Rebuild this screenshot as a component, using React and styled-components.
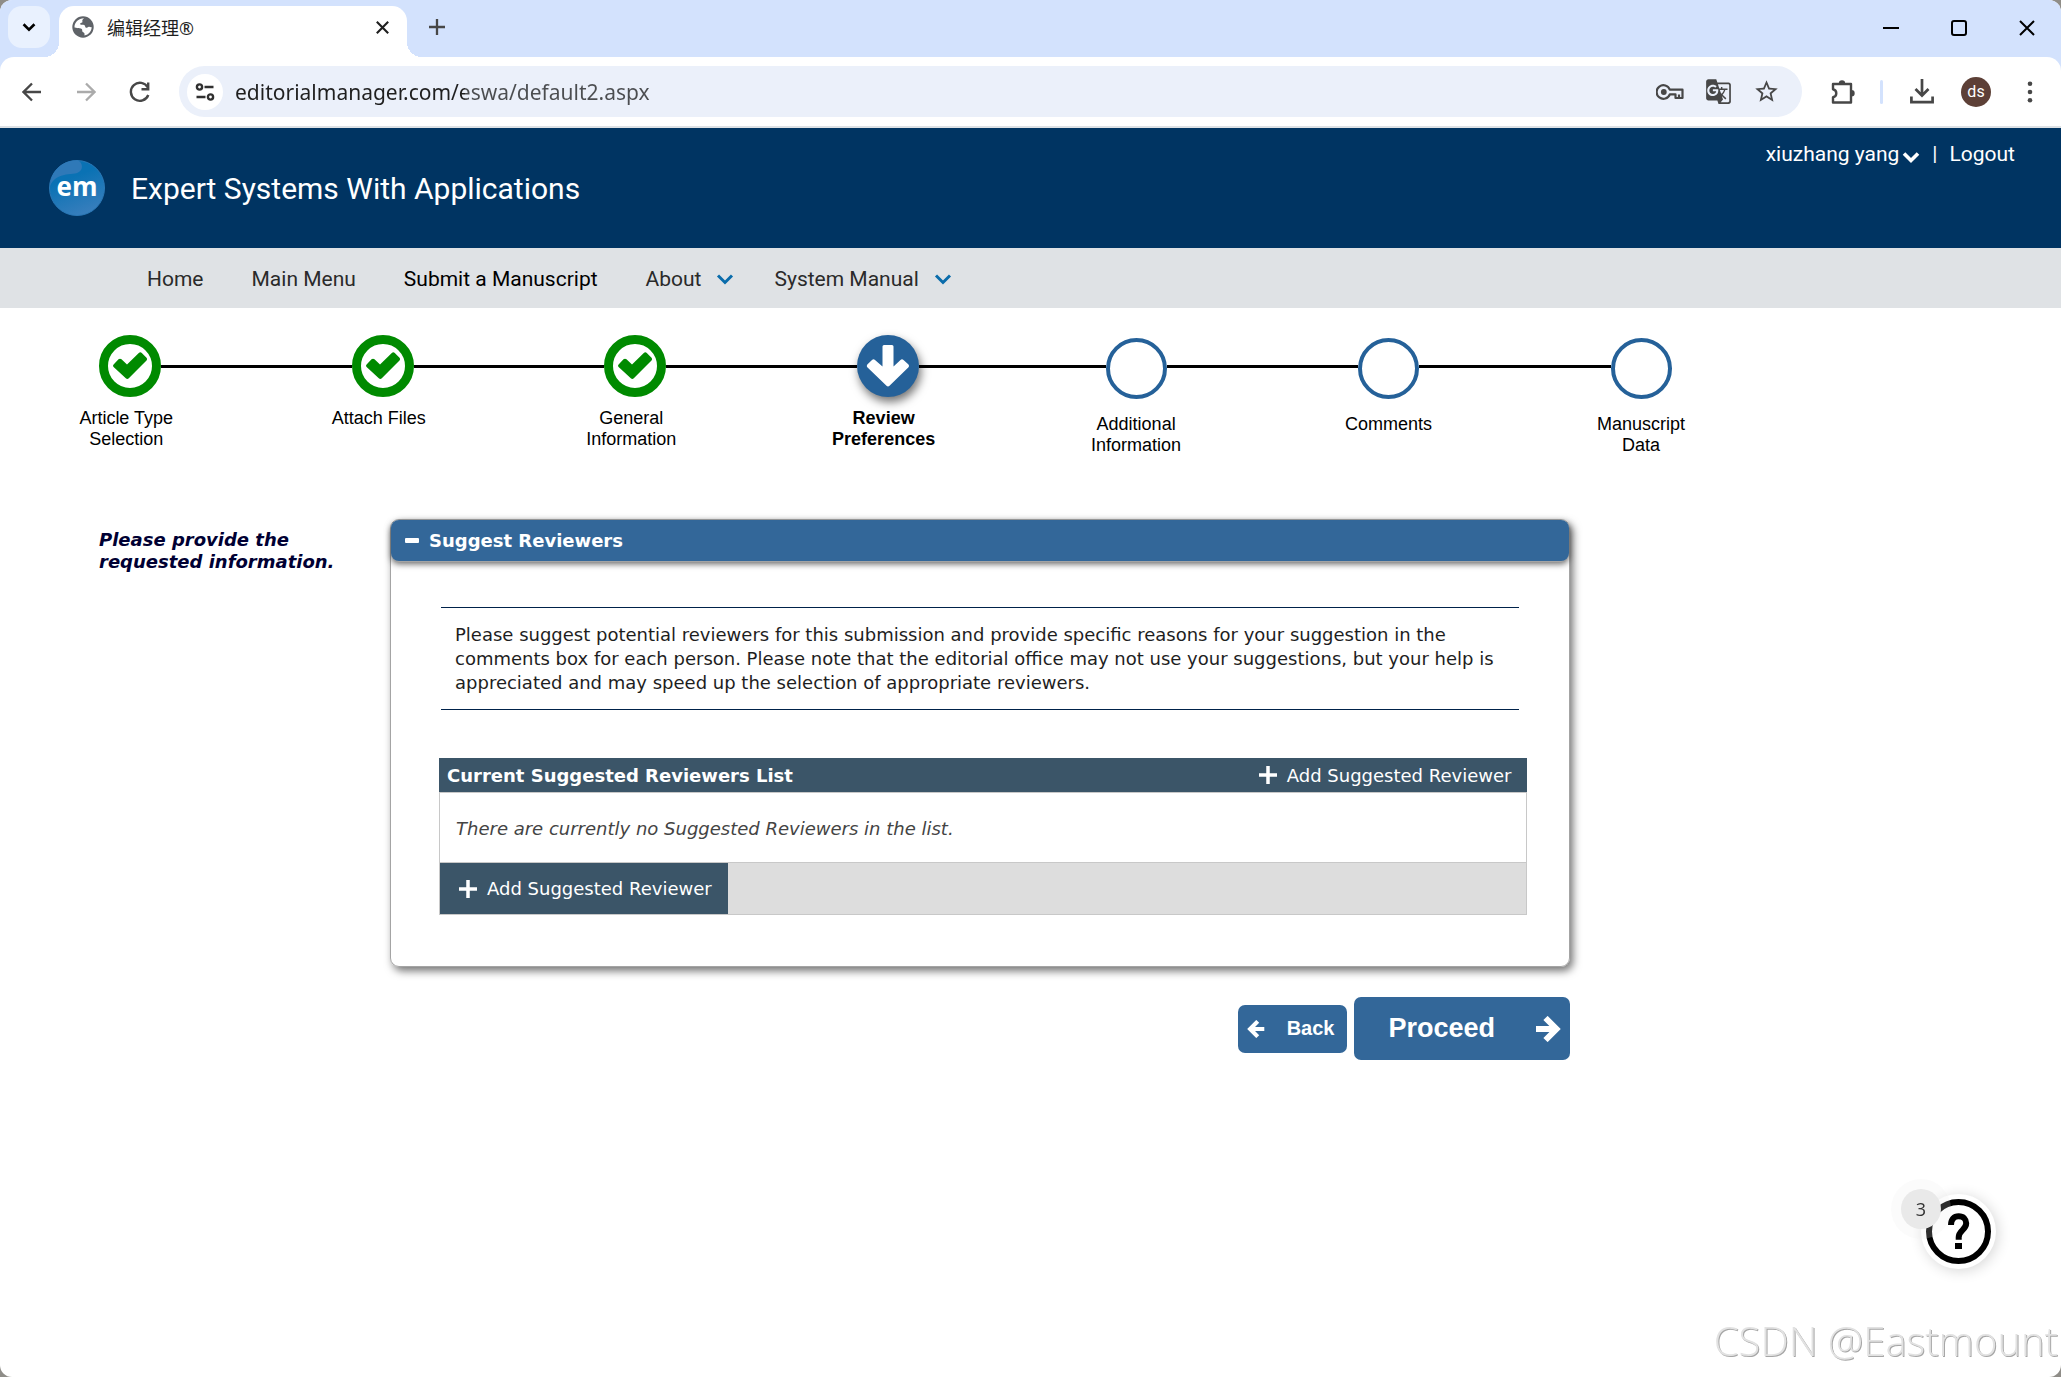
import styled, { createGlobalStyle, css } from 'styled-components';
import { MdGTranslate, MdStarBorder } from 'react-icons/md';

const GlobalStyle = createGlobalStyle`
  *, *::before, *::after {
    box-sizing: border-box;
  }
  body {
    margin: 0;
    background: #8f8d88;
    font-family: "DejaVu Sans", Verdana, sans-serif;
  }
  button {
    font: inherit;
    color: inherit;
    background: none;
    border: none;
    padding: 0;
    cursor: pointer;
  }
  a {
    color: inherit;
    text-decoration: none;
  }
  svg {
    display: block;
    flex: none;
  }
`;

const Window = styled.div`
  min-height: 100vh;
  background: #fff;
  border-radius: 12px;
  overflow: hidden;
`;

/* ---------- browser chrome ---------- */

const TabStrip = styled.div`
  display: flex;
  align-items: flex-start;
  height: 57px;
  padding: 6px 0 0 8px;
  background: #d3e2fd;
`;

const TabSearch = styled.button`
  display: grid;
  place-items: center;
  width: 42px;
  height: 42px;
  margin-right: 9px;
  border-radius: 14px;
  background: #e9f1fe;
`;

const Tab = styled.div`
  position: relative;
  display: flex;
  align-items: center;
  width: 348px;
  height: 51px;
  padding: 0 18px 9px 13px;
  border-radius: 15px 15px 0 0;
  background: #fff;
  font-family: "Noto Sans", "Noto Sans CJK SC", sans-serif;
  font-size: 18px;
  color: #1f1f1f;
  &::before,
  &::after {
    content: '';
    position: absolute;
    bottom: 0;
    width: 15px;
    height: 15px;
  }
  &::before {
    right: 100%;
    background: radial-gradient(circle at 0 0, transparent 15px, #fff 15px);
  }
  &::after {
    left: 100%;
    background: radial-gradient(circle at 100% 0, transparent 15px, #fff 15px);
  }
  .title {
    flex: 1;
    margin-left: 13px;
  }
`;

const NewTab = styled.button`
  display: grid;
  place-items: center;
  width: 42px;
  height: 42px;
  margin-left: 9px;
  color: #474747;
`;

const WindowButtons = styled.div`
  display: flex;
  margin-left: auto;
  button {
    display: grid;
    place-items: center;
    width: 68px;
    height: 44px;
  }
`;

const ToolbarBack = styled.div`
  background: #d3e2fd;
`;

const Toolbar = styled.div`
  display: flex;
  align-items: center;
  height: 71px;
  padding: 0 14px 0 5px;
  border-radius: 14px 14px 0 0;
  border-bottom: 2px solid #dde1e5;
  background: #fff;
  color: #474747;
`;

const ToolButton = styled.button`
  display: grid;
  place-items: center;
  width: ${({ $width }) => $width || 54}px;
  height: 48px;
  color: ${({ $dim }) => ($dim ? '#ababab' : 'inherit')};
`;

const Omnibox = styled.div`
  flex: 1;
  display: flex;
  align-items: center;
  height: 51px;
  margin: 0 14px 0 12px;
  padding: 0 12px 0 8px;
  border-radius: 26px;
  background: #ebf0fa;
`;

const SiteInfo = styled.button`
  display: grid;
  place-items: center;
  width: 36px;
  height: 36px;
  border-radius: 50%;
  background: #fff;
`;

const Address = styled.input`
  flex: 1;
  min-width: 0;
  margin: 0 12px;
  padding: 0;
  border: none;
  outline: none;
  font-family: "Noto Sans", "Open Sans", sans-serif;
  font-size: 21px;
  line-height: 30px;
  color: #1f1f1f;
  /* the path part of the address is greyed */
  background: linear-gradient(90deg, #1f1f1f 230px, #4b4d50 230px);
  background-clip: text;
  -webkit-text-fill-color: transparent;
`;

const Separator = styled.div`
  width: 3px;
  height: 24px;
  margin: 0 12px 0 10px;
  border-radius: 2px;
  background: #d3e2fd;
`;

const Avatar = styled.button`
  width: 30px;
  height: 30px;
  margin: 0 22px 0 12px;
  border-radius: 50%;
  background: #5d4037;
  color: #fff;
  font-family: Roboto, sans-serif;
  font-size: 16px;
`;

/* ---------- site header ---------- */

const Header = styled.header`
  display: flex;
  justify-content: space-between;
  align-items: flex-start;
  height: 120px;
  padding: 0 46px 0 49px;
  background: #003462;
  color: #fff;
  font-family: Roboto, sans-serif;
`;

const Brand = styled.div`
  display: flex;
  align-items: center;
  gap: 26px;
  height: 120px;
  h1 {
    margin: 0;
    font-size: 30px;
    font-weight: 400;
  }
`;

const UserLinks = styled.div`
  display: flex;
  align-items: center;
  gap: 12px;
  padding-top: 11px;
  font-size: 21px;
  line-height: 30px;
  button {
    display: flex;
    align-items: center;
    gap: 3px;
  }
  svg {
    margin-top: 5px;
  }
`;

const Nav = styled.nav`
  display: flex;
  align-items: center;
  gap: 40px;
  height: 60px;
  padding: 2px 0 0 147px;
  background: #dfe2e5;
  font-family: Roboto, sans-serif;
  font-size: 21px;
`;

const NavLink = styled.a`
  display: flex;
  align-items: center;
  gap: 15px;
  padding-right: ${({ $menu }) => ($menu ? '0' : '8px')};
  color: ${({ $active }) => ($active ? '#000' : '#2a2a2a')};
  svg {
    color: #0a6cab;
  }
`;

/* ---------- progress ---------- */

const Steps = styled.ol`
  display: flex;
  margin: 0;
  padding: 27px 0 0;
  list-style: none;
  font-family: "Liberation Sans", Arial, sans-serif;
  font-size: 18px;
  line-height: 21px;
  text-align: center;
  color: #000;
`;

const StepItem = styled.li`
  width: 12.25%;
  font-weight: ${({ $state }) => ($state === 'current' ? 700 : 400)};
  .label {
    display: block;
    width: 120px;
    margin: ${({ $state }) => ($state === 'todo' ? '15px' : '11px')} auto 0;
  }
`;

const StepTrack = styled.div`
  display: flex;
  align-items: flex-start;
  &::before,
  &::after {
    content: '';
    flex: 1 1 0;
    height: 3px;
    margin-top: 30px;
    background: #000;
  }
  ${({ $state }) =>
    $state !== 'todo' &&
    css`
      &::before {
        flex-basis: 8px;
      }
    `}
  ${StepItem}:first-child &::before,
  ${StepItem}:last-child &::after {
    background: none;
  }
`;

const StepCircle = styled.span`
  display: grid;
  place-items: center;
  width: 62px;
  height: 62px;
  border-radius: 50%;
  ${({ $state }) =>
    $state === 'done' &&
    css`
      border: 9px solid #008a00;
    `}
  ${({ $state }) =>
    $state === 'current' &&
    css`
      background: #256199;
      box-shadow: 2px 5px 10px rgba(0, 0, 0, 0.55);
    `}
  ${({ $state }) =>
    $state === 'todo' &&
    css`
      width: 61px;
      height: 61px;
      margin-top: 3px;
      border: 4px solid #256199;
    `}
`;

/* ---------- form ---------- */

const Content = styled.main`
  display: flex;
  width: 76.2%;
  padding-top: 63px;
`;

const Instructions = styled.p`
  flex: none;
  width: 390px;
  margin: 0;
  padding: 10px 40px 0 99px;
  font-size: 18px;
  line-height: 22px;
  font-weight: 700;
  font-style: italic;
  color: #000033;
`;

const Main = styled.div`
  flex: 1;
`;

const Panel = styled.section`
  border: 1px solid #a4a4a4;
  border-radius: 9px;
  box-shadow: 3px 4px 8px rgba(0, 0, 0, 0.55);
`;

const PanelTitle = styled.button`
  display: flex;
  align-items: center;
  gap: 10px;
  width: 100%;
  height: 41px;
  padding-left: 14px;
  border-radius: 8px;
  background: #336799;
  box-shadow: 0 1px 0 #a4a4a4, 0 3px 6px rgba(0, 0, 0, 0.6);
  color: #fff;
  font-size: 18px;
  line-height: 22px;
  font-weight: 700;
`;

const PanelBody = styled.div`
  padding: 46px 42px 51px 48px;
`;

const Hint = styled.p`
  margin: 0 8px 48px 2px;
  padding: 15px 14px 14px;
  border-top: 1px solid #00224a;
  border-bottom: 1px solid #00224a;
  font-size: 18px;
  line-height: 24px;
  color: #1e1e1e;
`;

const ListHead = styled.div`
  display: flex;
  align-items: center;
  justify-content: space-between;
  height: 34px;
  padding: 0 16px 0 8px;
  background: #3b5568;
  color: #fff;
  h2 {
    margin: 0;
    font-size: 18px;
    font-weight: 700;
  }
`;

const ListBody = styled.div`
  border: 1px solid #c8c8c8;
  p {
    margin: 0;
    padding: 24px 16px 22px;
    font-size: 18px;
    line-height: 23px;
    font-style: italic;
    color: #444;
  }
`;

const ListFoot = styled.div`
  display: flex;
  border-top: 1px solid #c8c8c8;
  background: #ddd;
`;

const AddButton = styled.button`
  display: flex;
  align-items: center;
  gap: 10px;
  color: #fff;
  font-size: 18px;
  ${({ $block }) =>
    $block &&
    css`
      height: 51px;
      padding: 0 16px 0 19px;
      background: #3b5568;
    `}
`;

const Actions = styled.div`
  display: flex;
  justify-content: flex-end;
  align-items: center;
  gap: 7px;
  margin-top: 30px;
`;

const ActionButton = styled.button`
  display: flex;
  align-items: center;
  justify-content: space-between;
  width: ${({ $large }) => ($large ? '216px' : '109px')};
  height: ${({ $large }) => ($large ? '63px' : '48px')};
  padding: ${({ $large }) => ($large ? '0 9px 0 34px' : '0 13px 0 9px')};
  border-radius: 7px;
  background: #336799;
  color: #fff;
  font-family: "Liberation Sans", Arial, sans-serif;
  font-size: ${({ $large }) => ($large ? '27px' : '20px')};
  font-weight: 700;
`;

/* ---------- overlays ---------- */

const Help = styled.button`
  position: fixed;
  right: 65px;
  bottom: 108px;
  display: grid;
  place-items: center;
  width: 75px;
  height: 75px;
  border-radius: 50%;
  background: #fff;
  box-shadow: 2px 2px 14px rgba(0, 0, 0, 0.16);
`;

const HelpCount = styled.span`
  position: absolute;
  top: -5px;
  left: -20px;
  width: 40px;
  height: 40px;
  border-radius: 50%;
  background: #e9e9e9;
  box-shadow: 0 0 0 10px rgba(233, 233, 233, 0.2);
  font-family: "Open Sans", sans-serif;
  font-size: 18px;
  line-height: 40px;
  color: #333;
`;

const Watermark = styled.div`
  position: fixed;
  right: 3px;
  bottom: 8px;
  font-family: "Open Sans", sans-serif;
  font-size: 40px;
  font-weight: 300;
  line-height: 56px;
  color: #e2e2e2;
  text-shadow: 1px 1px 0 #a6a6a6;
`;

/* ---------- icons ---------- */

const Chevron = ({ size = 18, width = 3 }) => (
  <svg width={size} height={size} viewBox="0 0 18 18" fill="none" stroke="currentColor" strokeWidth={width}>
    <path d="M2 5.5 9 12.5 16 5.5" />
  </svg>
);

const PlusIcon = ({ size = 18, width = 3.5 }) => (
  <svg width={size} height={size} viewBox="0 0 18 18" stroke="currentColor" strokeWidth={width}>
    <path d="M9 0v18M0 9h18" />
  </svg>
);

const CrossIcon = ({ size, width }) => (
  <svg width={size} height={size} viewBox="0 0 16 16" stroke="currentColor" strokeWidth={width}>
    <path d="M1 1 15 15M15 1 1 15" />
  </svg>
);

const GlobeIcon = () => (
  <svg width="22" height="22" viewBox="0 0 22 22">
    <circle cx="11" cy="11" r="10.7" fill="#5f6368" />
    <path
      fill="#fff"
      d="M12.2 2.3C10.6 3.2 10 4.3 10.4 5.4c.4 1-.7 1.3-1.6 1.5-1.2.3-.7 1.7.3 1.9 1 .2 3.1-.2 3.7.7.6 1 .2 2 1.5 2.3 1.2.2 1.5-1.3 2.8-1.1 1 .1 1.7.8 2.6.3-.1 4-2.9 7.7-7.2 8.5v-1.8c0-1.3-1.3-1.1-2-2-.6-.8.1-1.8-.7-2.7-1-1-3.2-.4-4.7-1-.9-.3-1.7-.6-2.6-.5C2.2 6.8 6.3 2.3 12.2 2.3Z"
    />
  </svg>
);

const ArrowIcon = ({ flip }) => (
  <svg width="20" height="20" viewBox="0 0 20 20" fill="none" stroke="currentColor" strokeWidth="2.3">
    <path d={flip ? 'M1 10h17M10 1.5 18.5 10 10 18.5' : 'M19 10H2M10 1.5 1.5 10 10 18.5'} />
  </svg>
);

const ReloadIcon = () => (
  <svg width="22" height="22" viewBox="0 0 22 22" fill="none" stroke="currentColor" strokeWidth="2.4">
    <path d="M18.8 6.5A9 9 0 1 0 19.3 14" />
    <path d="M19.2 1.5v6.800h-6.700" />
  </svg>
);

const TuneIcon = () => (
  <svg width="20" height="18" viewBox="0 0 20 18" fill="none" stroke="#303030" strokeWidth="2.4">
    <circle cx="4.5" cy="4" r="2.6" />
    <path d="M9.5 4H18.5M1.5 14H10.5" />
    <circle cx="15.5" cy="14" r="2.6" />
  </svg>
);

const KeyIcon = () => (
  <svg width="28" height="16" viewBox="0 0 28 16" fill="none" stroke="currentColor" strokeWidth="2.2">
    <path d="M13.8 5.7A6.8 6.8 0 1 0 13.8 10.3H19.5V14H26.5V5.7Z" strokeLinejoin="round" />
    <path d="M23 10.5V14" />
    <circle cx="7.8" cy="8" r="2.9" fill="currentColor" stroke="none" />
  </svg>
);

const PuzzleIcon = () => (
  <svg width="26" height="26" viewBox="0 0 26 26" fill="none" stroke="currentColor" strokeWidth="2.4">
    <path d="M3 5h18v18.5H3v-5.3c2-.4 3.3-2 3.3-4s-1.3-3.6-3.3-4Z" strokeLinejoin="round" />
    <path fill="currentColor" stroke="none" d="M8.8 4.5a3.2 3.2 0 0 1 6.4 0ZM21.5 11a3.2 3.2 0 0 1 0 6.4Z" />
  </svg>
);

const DownloadIcon = () => (
  <svg width="24" height="25" viewBox="0 0 24 25" fill="none" stroke="currentColor" strokeWidth="2.7">
    <path d="M12 0v16M5.5 10 12 16.5 18.5 10M1.4 17.5v5.7h21.2v-5.7" />
  </svg>
);

const DotsIcon = () => (
  <svg width="6" height="22" viewBox="0 0 6 22" fill="currentColor">
    <circle cx="3" cy="2.7" r="2.3" />
    <circle cx="3" cy="11" r="2.3" />
    <circle cx="3" cy="19.3" r="2.3" />
  </svg>
);

const Logo = () => (
  <svg width="56" height="56" viewBox="0 0 56 56" role="img" aria-label="em">
    <defs>
      <linearGradient id="ball" x1="0.3" y1="0" x2="0.7" y2="1">
        <stop offset="0.3" stopColor="#0a72b4" />
        <stop offset="1" stopColor="#3b7fbd" />
      </linearGradient>
    </defs>
    <circle cx="28" cy="28" r="27.5" fill="url(#ball)" stroke="#2b78b6" />
    <path
      fill="#2f79b8"
      d="M1 26C2 10 14 0 28 .5c4 .5 6 5 4.5 8.5C30 14.5 23 13.5 17 14.5 9 16 4 19 1 26Z"
    />
    <text
      x="28"
      y="36"
      textAnchor="middle"
      fill="#fff"
      fontFamily="Open Sans, sans-serif"
      fontWeight="700"
      fontSize="26"
    >
      em
    </text>
  </svg>
);

const CheckIcon = () => (
  <svg width="34" height="28" viewBox="0 0 34 28" fill="#008a00">
    <path d="M.6 12.5 5.5 7.3Q7 6 8.5 7.3L14 12.5 25.8.9Q27.3-.4 28.8.9L33.5 5.7Q34.6 7.2 33.5 8.6L15.8 26.3Q14.3 27.7 12.8 26.3L.6 15Q-.6 13.8.6 12.5Z" />
  </svg>
);

const DownIcon = () => (
  <svg width="44" height="42" viewBox="0 0 44 42" fill="#fff">
    <path d="M18 0H26Q27.5 0 27.5 1.5V21.5L34.5 15Q36 13.7 37.5 15L42.5 19.6Q43.7 21 42.5 22.3L23.5 40.8Q22 42 20.5 40.8L1.3 22.3Q.2 21 1.3 19.6L6 15Q7.5 13.7 9 15L16.5 21.5V1.5Q16.5 0 18 0Z" />
  </svg>
);

const BoldArrow = ({ size, left }) => (
  <svg width={size} height={size} viewBox="0 0 26 26" fill="none" stroke="currentColor" strokeWidth="6">
    {left ? <path d="M25 13H6M15.5 2 4.5 13 15.5 24" /> : <path d="M1 13H20M10.5 2 21.5 13 10.5 24" />}
  </svg>
);

const HelpIcon = () => (
  <svg width="65" height="65" viewBox="0 0 65 65" fill="none" stroke="#000">
    <circle cx="32.5" cy="32.5" r="29.5" strokeWidth="6" />
    <path d="M25 26c0-5.5 3-8.7 7.7-8.7 4.8 0 7.5 3 7.5 7 0 6.7-7.5 7-7.5 14v2.5" strokeWidth="6" />
    <path d="M32.5 44v6" strokeWidth="7" />
  </svg>
);

/* ---------- page ---------- */

const NAV = [
  { label: 'Home' },
  { label: 'Main Menu' },
  { label: 'Submit a Manuscript', active: true },
  { label: 'About', menu: true },
  { label: 'System Manual', menu: true },
];

const STEPS = [
  { label: 'Article Type Selection', state: 'done' },
  { label: 'Attach Files', state: 'done' },
  { label: 'General Information', state: 'done' },
  { label: 'Review Preferences', state: 'current' },
  { label: 'Additional Information', state: 'todo' },
  { label: 'Comments', state: 'todo' },
  { label: 'Manuscript Data', state: 'todo' },
];

function Browser() {
  return (
    <>
      <TabStrip>
        <TabSearch aria-label="Search tabs">
          <Chevron size={14} width={3.4} />
        </TabSearch>
        <Tab>
          <GlobeIcon />
          <span className="title">编辑经理®</span>
          <button aria-label="Close tab">
            <CrossIcon size={13} width={2.6} />
          </button>
        </Tab>
        <NewTab aria-label="New tab">
          <PlusIcon size={16} width={2.6} />
        </NewTab>
        <WindowButtons>
          <button aria-label="Minimize">
            <svg width="16" height="2">
              <rect width="16" height="2" />
            </svg>
          </button>
          <button aria-label="Maximize">
            <svg width="16" height="16" fill="none" stroke="#000" strokeWidth="2">
              <rect x="1" y="1" width="14" height="14" rx="2" />
            </svg>
          </button>
          <button aria-label="Close">
            <CrossIcon size={16} width={2} />
          </button>
        </WindowButtons>
      </TabStrip>
      <ToolbarBack>
        <Toolbar>
          <ToolButton aria-label="Back">
            <ArrowIcon />
          </ToolButton>
          <ToolButton $dim aria-label="Forward">
            <ArrowIcon flip />
          </ToolButton>
          <ToolButton aria-label="Reload">
            <ReloadIcon />
          </ToolButton>
          <Omnibox>
            <SiteInfo aria-label="Site information">
              <TuneIcon />
            </SiteInfo>
            <Address aria-label="Address" defaultValue="editorialmanager.com/eswa/default2.aspx" />
            <ToolButton $width={48} aria-label="Passwords">
              <KeyIcon />
            </ToolButton>
            <ToolButton $width={48} aria-label="Translate">
              <MdGTranslate size={27} />
            </ToolButton>
            <ToolButton $width={48} aria-label="Bookmark">
              <MdStarBorder size={27} />
            </ToolButton>
          </Omnibox>
          <ToolButton aria-label="Extensions">
            <PuzzleIcon />
          </ToolButton>
          <Separator />
          <ToolButton aria-label="Downloads">
            <DownloadIcon />
          </ToolButton>
          <Avatar>ds</Avatar>
          <ToolButton $width={34} aria-label="Menu">
            <DotsIcon />
          </ToolButton>
        </Toolbar>
      </ToolbarBack>
    </>
  );
}

function Step({ label, state }) {
  return (
    <StepItem $state={state}>
      <StepTrack $state={state}>
        <StepCircle $state={state}>
          {state === 'done' && <CheckIcon />}
          {state === 'current' && <DownIcon />}
        </StepCircle>
      </StepTrack>
      <span className="label">{label}</span>
    </StepItem>
  );
}

export default function App() {
  return (
    <Window>
      <GlobalStyle />
      <Browser />
      <Header>
        <Brand>
          <Logo />
          <h1>Expert Systems With Applications</h1>
        </Brand>
        <UserLinks>
          <button>
            xiuzhang yang
            <Chevron width={3.6} />
          </button>
          <span>|</span>
          <a href="#logout">Logout</a>
        </UserLinks>
      </Header>
      <Nav>
        {NAV.map(({ label, active, menu }) => (
          <NavLink key={label} href="#" $active={active} $menu={menu}>
            {label}
            {menu && <Chevron />}
          </NavLink>
        ))}
      </Nav>
      <Steps>
        {STEPS.map((step) => (
          <Step key={step.label} {...step} />
        ))}
      </Steps>
      <Content>
        <Instructions>Please provide the requested information.</Instructions>
        <Main>
          <Panel>
            <PanelTitle aria-expanded="true">
              <svg width="14" height="5">
                <rect width="14" height="5" rx="1" fill="#fff" />
              </svg>
              Suggest Reviewers
            </PanelTitle>
            <PanelBody>
              <Hint>
                Please suggest potential reviewers for this submission and provide specific reasons for your
                suggestion in the comments box for each person. Please note that the editorial office may not use
                your suggestions, but your help is appreciated and may speed up the selection of appropriate
                reviewers.
              </Hint>
              <ListHead>
                <h2>Current Suggested Reviewers List</h2>
                <AddButton>
                  <PlusIcon />
                  Add Suggested Reviewer
                </AddButton>
              </ListHead>
              <ListBody>
                <p>There are currently no Suggested Reviewers in the list.</p>
                <ListFoot>
                  <AddButton $block>
                    <PlusIcon />
                    Add Suggested Reviewer
                  </AddButton>
                </ListFoot>
              </ListBody>
            </PanelBody>
          </Panel>
          <Actions>
            <ActionButton>
              <BoldArrow size={18} left />
              Back
            </ActionButton>
            <ActionButton $large>
              Proceed
              <BoldArrow size={26} />
            </ActionButton>
          </Actions>
        </Main>
      </Content>
      <Help aria-label="Help, 3 items">
        <HelpIcon />
        <HelpCount>3</HelpCount>
      </Help>
      <Watermark>CSDN @Eastmount</Watermark>
    </Window>
  );
}
